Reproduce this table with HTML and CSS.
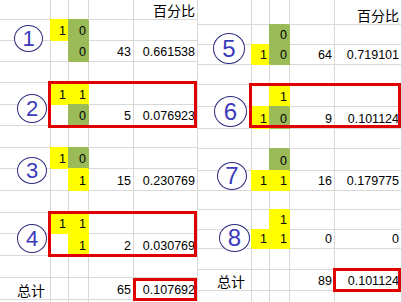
FILE: index.html
```html
<!DOCTYPE html>
<html lang="zh">
<head>
<meta charset="utf-8">
<title>百分比</title>
<link rel="stylesheet" href="styles.css">
</head>
<body>
<div class="sheets">
  <div class="panel left">
    <div class="c"></div><div class="c"></div><div class="c"></div><div class="c"></div><div class="c h">百分比</div>
    <div class="c"></div><div class="c y">1</div><div class="c g">0</div><div class="c"></div><div class="c"></div>
    <div class="c"></div><div class="c"></div><div class="c g">0</div><div class="c">43</div><div class="c">0.661538</div>
    <div class="c"></div><div class="c"></div><div class="c"></div><div class="c"></div><div class="c"></div>
    <div class="c"></div><div class="c y">1</div><div class="c y">1</div><div class="c"></div><div class="c"></div>
    <div class="c"></div><div class="c"></div><div class="c g">0</div><div class="c">5</div><div class="c">0.076923</div>
    <div class="c"></div><div class="c"></div><div class="c"></div><div class="c"></div><div class="c"></div>
    <div class="c"></div><div class="c y">1</div><div class="c g">0</div><div class="c"></div><div class="c"></div>
    <div class="c"></div><div class="c"></div><div class="c y">1</div><div class="c">15</div><div class="c">0.230769</div>
    <div class="c"></div><div class="c"></div><div class="c"></div><div class="c"></div><div class="c"></div>
    <div class="c"></div><div class="c y">1</div><div class="c y">1</div><div class="c"></div><div class="c"></div>
    <div class="c"></div><div class="c"></div><div class="c y">1</div><div class="c">2</div><div class="c">0.030769</div>
    <div class="c"></div><div class="c"></div><div class="c"></div><div class="c"></div><div class="c"></div>
    <div class="c h t tl">总计</div><div class="c"></div><div class="c"></div><div class="c">65</div><div class="c">0.107692</div>
    <div class="c"></div><div class="c"></div><div class="c"></div><div class="c"></div><div class="c"></div>

    <div class="circ n1">1</div>
    <div class="circ n2">2</div>
    <div class="circ n3">3</div>
    <div class="circ n4">4</div>
    <div class="box b2"></div>
    <div class="box b4"></div>
    <div class="box bl"></div>
  </div>

  <div class="panel right">
    <div class="c"></div><div class="c"></div><div class="c"></div><div class="c"></div><div class="c h">百分比</div>
    <div class="c"></div><div class="c"></div><div class="c g">0</div><div class="c"></div><div class="c"></div>
    <div class="c"></div><div class="c y">1</div><div class="c g">0</div><div class="c">64</div><div class="c">0.719101</div>
    <div class="c"></div><div class="c"></div><div class="c"></div><div class="c"></div><div class="c"></div>
    <div class="c"></div><div class="c"></div><div class="c y">1</div><div class="c"></div><div class="c"></div>
    <div class="c"></div><div class="c y">1</div><div class="c g">0</div><div class="c">9</div><div class="c">0.101124</div>
    <div class="c"></div><div class="c"></div><div class="c"></div><div class="c"></div><div class="c"></div>
    <div class="c"></div><div class="c"></div><div class="c g">0</div><div class="c"></div><div class="c"></div>
    <div class="c"></div><div class="c y">1</div><div class="c y">1</div><div class="c">16</div><div class="c">0.179775</div>
    <div class="c"></div><div class="c"></div><div class="c"></div><div class="c"></div><div class="c"></div>
    <div class="c"></div><div class="c"></div><div class="c y">1</div><div class="c"></div><div class="c"></div>
    <div class="c"></div><div class="c y">1</div><div class="c y">1</div><div class="c">0</div><div class="c">0</div>
    <div class="c"></div><div class="c"></div><div class="c"></div><div class="c"></div><div class="c"></div>
    <div class="c h t tr">总计</div><div class="c"></div><div class="c"></div><div class="c">89</div><div class="c">0.101124</div>
    <div class="c"></div><div class="c"></div><div class="c"></div><div class="c"></div><div class="c"></div>

    <div class="circ n5">5</div>
    <div class="circ n6">6</div>
    <div class="circ n7">7</div>
    <div class="circ n8">8</div>
    <div class="box b6"></div>
    <div class="box br"></div>
  </div>
</div>
</body>
</html>
```
FILE: styles.css
```css
* { box-sizing: border-box; }

body {
  margin: 0;
  background: #fff;
  font-family: "Liberation Sans", "Noto Sans CJK SC", sans-serif;
  font-size: 12.5px;
  color: #000;
}

.sheets {
  display: flex;
  width: 402px;
  height: 302px;
  overflow: hidden;
}

.panel {
  position: relative;
  display: grid;
  align-content: start;
}

.left {
  width: 198px;
  grid-template-columns: 51px 18px 20px 45px 64px;
  grid-template-rows: 20px 21px 21px 21px 22px 21px 22px 21px 22px 22px 21px 22px 22px 22px 22px;
}

.right {
  width: 204px;
  grid-template-columns: 54px 18px 20px 45px 67px;
  grid-template-rows: 25px 20px 20px 20px 22px 22px 20px 22px 20px 19px 20px 19px 21px 21px 21px;
}

.c {
  border-right: 1px solid #d9d9d9;
  border-bottom: 1px solid #d9d9d9;
  display: flex;
  align-items: flex-end;
  justify-content: flex-end;
  padding: 0 2px 2px 0;
  line-height: 14px;
  white-space: nowrap;
}

.y {
  background: #ffff00;
  border-color: #ffff00;
  box-shadow: -1px -1px 0 #ffff00;
}

.g {
  background: #9bbb59;
  border-color: #9bbb59;
  box-shadow: -1px -1px 0 #9bbb59;
}

.h {
  font-family: "Noto Sans CJK SC", sans-serif;
  font-size: 14px;
  line-height: 16px;
  padding-bottom: 1px;
}

.t { justify-content: flex-start; }
.tl { padding-left: 17px; }
.tr { padding-left: 19px; }

.circ {
  position: absolute;
  border: 1px solid #2b2b7f;
  border-radius: 50%;
  background: #fff;
  display: flex;
  align-items: center;
  justify-content: center;
  color: #3b3bbb;
  font-family: "Liberation Sans", sans-serif;
  font-size: 22px;
  line-height: 1;
}

.n1 { left: 14px; top: 25px; width: 29px; height: 27px; }
.n2 { left: 17px; top: 94px; width: 30px; height: 29px; }
.n3 { left: 17px; top: 157px; width: 30px; height: 27px; }
.n4 { left: 17px; top: 224px; width: 30px; height: 29px; }
.n5 { left: 15px; top: 33px; width: 32px; height: 31px; font-size: 24px; }
.n6 { left: 16px; top: 96px; width: 33px; height: 31px; font-size: 24px; }
.n7 { left: 19px; top: 162px; width: 30px; height: 28px; font-size: 24px; }
.n8 { left: 21px; top: 224px; width: 31px; height: 28px; font-size: 24px; }

.box {
  position: absolute;
  border: 3px solid #e00000;
}

.b2 { left: 48px; top: 81px; width: 149px; height: 47px; }
.b4 { left: 48px; top: 211px; width: 149px; height: 46px; }
.bl { left: 133px; top: 278px; width: 64px; height: 23px; }
.b6 { left: 51px; top: 83px; width: 152px; height: 45px; }
.br { left: 135px; top: 268px; width: 68px; height: 24px; }
```
